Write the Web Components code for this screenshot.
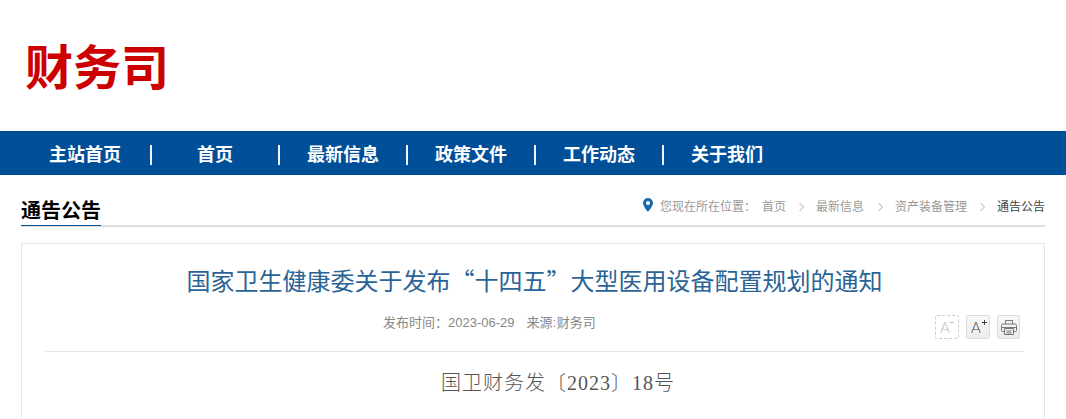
<!DOCTYPE html>
<html lang="zh">
<head>
<meta charset="utf-8">
<title>财务司</title>
<style>
  html, body { margin: 0; padding: 0; background: #fff; }
  body { font-family: "Liberation Sans", "Noto Sans CJK SC", sans-serif; }
</style>
</head>
<body>
<site-header></site-header>
<main-nav>
  <nav-item style="--w: 132px">主站首页</nav-item>
  <nav-item>首页</nav-item>
  <nav-item>最新信息</nav-item>
  <nav-item>政策文件</nav-item>
  <nav-item>工作动态</nav-item>
  <nav-item last>关于我们</nav-item>
</main-nav>
<section-head title="通告公告">
  <crumb-trail></crumb-trail>
</section-head>
<article-card>
  <span slot="title">国家卫生健康委关于发布“十四五”大型医用设备配置规划的通知</span>
  <span slot="date">发布时间：2023-06-29</span>
  <span slot="source">来源: 财务司</span>
  <p>国卫财务发〔2023〕18号</p>
</article-card>

<script>
const FONT = `"Liberation Sans", "Noto Sans CJK SC", sans-serif`;
const CJK = `"Noto Sans CJK SC", sans-serif`;

class SiteHeader extends HTMLElement {
  constructor() {
    super();
    this.attachShadow({ mode: "open" }).innerHTML = `
      <style>
        :host { display: flex; align-items: center; height: 131px; padding: 6px 0 0 25px; box-sizing: border-box; }
        h1 { margin: 0; font: 700 48px/56px ${FONT}; color: #cc0000; }
      </style>
      <h1>财务司</h1>`;
  }
}

class MainNav extends HTMLElement {
  constructor() {
    super();
    this.attachShadow({ mode: "open" }).innerHTML = `
      <style>
        :host { display: flex; align-items: center; box-sizing: border-box; height: 44px; padding: 4px 0 0 20px; background: #004f99; }
      </style>
      <slot></slot>`;
  }
}

class NavItem extends HTMLElement {
  constructor() {
    super();
    this.attachShadow({ mode: "open" }).innerHTML = `
      <style>
        :host { display: flex; align-items: center; justify-content: center; box-sizing: border-box;
                width: var(--w, 128px); height: 20px; color: #fff; font: 700 18px/20px ${FONT};
                border-right: 2px solid #f2f6fa; }
        :host([last]) { border-right: 0; width: 126px; }
      </style>
      <slot></slot>`;
  }
}

class SectionHead extends HTMLElement {
  constructor() {
    super();
    this.attachShadow({ mode: "open" }).innerHTML = `
      <style>
        :host { display: flex; justify-content: space-between; align-items: flex-end; box-sizing: border-box;
                height: 52px; margin: 0 21px; border-bottom: 2px solid #ddd; }
        h2 { margin: 0 0 -1px; height: 25px; font: 700 20px/22px ${FONT}; color: #000; border-bottom: 1px solid #004f99; }
      </style>
      <h2></h2>
      <slot></slot>`;
    this.shadowRoot.querySelector("h2").textContent = this.getAttribute("title");
  }
}

class CrumbTrail extends HTMLElement {
  constructor() {
    super();
    const chevron = (left, right) => `<svg style="margin: 0 ${right}px 0 ${left}px" width="5" height="10" viewBox="0 0 5 10"><path d="M.5 1l4 4-4 4" fill="none" stroke="#aaa"/></svg>`;
    this.attachShadow({ mode: "open" }).innerHTML = `
      <style>
        :host { display: flex; align-items: center; height: 20px; margin-bottom: 8px; font: 12px/20px ${FONT}; color: #999; }
        svg { display: block; }
        .pin { margin: -4px 7px 0 0; }
        .here { margin-right: 6px; }
        .cur { color: #444; }
      </style>
      <svg class="pin" width="10" height="14" viewBox="0 0 10 14"><path fill="#1a69a8" fill-rule="evenodd" d="M5 0A5 5 0 0 0 0 5C0 8 3.200 11.700 5 14 6.800 11.700 10 8 10 5A5 5 0 0 0 5 0Zm0 3a2 2 0 1 1 0 4 2 2 0 0 1 0-4Z"/></svg>
      <span class="here">您现在所在位置：</span>
      <span>首页</span>${chevron(13, 12)}
      <span>最新信息</span>${chevron(14, 12)}
      <span>资产装备管理</span>${chevron(13, 12)}
      <span class="cur">通告公告</span>`;
  }
}

class ToolButton extends HTMLElement {
  constructor() {
    super();
    const kind = this.getAttribute("kind");
    const icons = {
      minus: `<text x="5" y="18" font-size="15" fill="#bbb">A</text><path d="M15 7.500h4" stroke="#bbb"/>`,
      plus: `<text x="5" y="18" font-size="15" fill="#444">A</text><path d="M16 7.500h5M18.500 5v5" stroke="#444"/>`,
      print: `<path d="M8.500 9V5.500h7V9M7.500 16.500h-2a1 1 0 0 1-1-1v-5a1.500 1.500 0 0 1 1.500-1.500h12a1.500 1.500 0 0 1 1.500 1.500v5a1 1 0 0 1-1 1h-2M7.500 13.500h9v6h-9zM4.500 12.500h15M9.500 16h5M9.500 18h5" fill="none" stroke="#777"/>`,
    };
    this.attachShadow({ mode: "open" }).innerHTML = `
      <style>
        :host { display: block; box-sizing: border-box; width: 24px; height: 24px; border: 1px solid #ddd;
                border-radius: 2px; background: linear-gradient(#f8f8f8, #ececec); }
        :host([kind="minus"]) { border: 1px dashed #ccc; background: #fff; }
        :host([kind="print"]) { width: 23px; }
        svg { display: block; margin: -1px; font-family: Lato, "Liberation Sans", sans-serif; font-weight: 300; }
      </style>
      <svg width="24" height="24" viewBox="0 0 24 24">${icons[kind]}</svg>`;
  }
}

class ArticleCard extends HTMLElement {
  constructor() {
    super();
    this.attachShadow({ mode: "open" }).innerHTML = `
      <style>
        :host { display: block; box-sizing: border-box; margin: 16px 21px 0; padding: 0 20px 0 23px; border: 1px solid #e6e6e6; border-bottom: 0; height: 175px; }
        .title { padding-top: 20px; height: 34px; text-align: center; font: 24px/32px ${CJK}; color: #2a6496; }
        .meta { display: flex; position: relative; gap: 12px; align-items: center; box-sizing: border-box;
                height: 54px; padding: 0 0 3px 338px; border-bottom: 1px solid #e6e6e6; font: 13px/16px ${FONT}; color: #888; word-spacing: -3px; }
        .tools { position: absolute; right: 4px; top: 17px; display: flex; gap: 7px; }
        .body { padding: 18px 0 0 396px; font: 20px/26px "Liberation Serif", ${CJK}; font-weight: 300; color: #555; letter-spacing: 1px; white-space: nowrap; }
        ::slotted(p) { margin: 0; }
      </style>
      <div class="title"><slot name="title"></slot></div>
      <div class="meta">
        <slot name="date"></slot><slot name="source"></slot>
        <div class="tools">
          <tool-button kind="minus"></tool-button>
          <tool-button kind="plus"></tool-button>
          <tool-button kind="print"></tool-button>
        </div>
      </div>
      <div class="body"><slot></slot></div>`;
  }
}

customElements.define("site-header", SiteHeader);
customElements.define("main-nav", MainNav);
customElements.define("nav-item", NavItem);
customElements.define("section-head", SectionHead);
customElements.define("crumb-trail", CrumbTrail);
customElements.define("tool-button", ToolButton);
customElements.define("article-card", ArticleCard);
</script>
</body>
</html>
